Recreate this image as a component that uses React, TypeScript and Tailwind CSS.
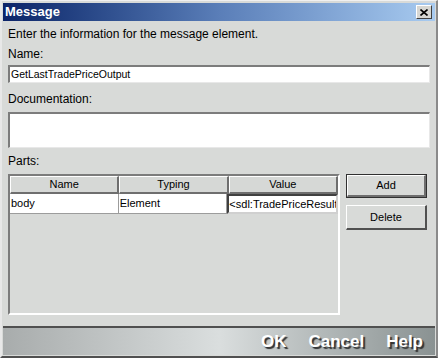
import React from 'react'

const font = { fontFamily: '"Liberation Sans", Arial, sans-serif' }

function HeaderCell({ label }: { label: string }) {
  return (
    <div className="flex h-[18px] flex-1 items-center justify-center border-t border-l border-r-2 border-b-2 border-t-white border-l-white border-r-[#6e6e6e] border-b-[#6e6e6e] bg-[#d6d8d6] text-[11px] text-black">
      {label}
    </div>
  )
}

export default function App() {
  return (
    <div
      className="flex h-[358px] w-[438px] flex-col border-t border-l-2 border-r-2 border-b-2 border-t-[#f0f0f0] border-l-[#e8e8e8] border-r-[#8a8a8a] border-b-[#505050] bg-[#d8dad8] p-[1px]"
      style={font}
    >
      {/* Title bar */}
      <div className="mt-[1px] flex h-[18px] items-center justify-between bg-gradient-to-r from-[#0c2468] via-[#5a7eb8] to-[#a8cbf0] pl-[2px] pr-[3px]">
        <span className="text-[13px] font-bold text-white">Message</span>
        <div className="flex h-[14px] w-[16px] items-center justify-center border border-t-white border-l-white border-r-[#404040] border-b-[#404040] bg-[#d6d6d2]">
          <svg width="8" height="7" viewBox="0 0 8 7">
            <path d="M0.5 0.5 L7.5 6.5 M7.5 0.5 L0.5 6.5" stroke="#000" strokeWidth="1.6" />
          </svg>
        </div>
      </div>

      {/* Content */}
      <div className="flex flex-1 flex-col px-[5px] text-[12px] text-black">
        <p className="mt-[5px] h-[16px] leading-[16px]">Enter the information for the message element.</p>
        <p className="mt-[4px] h-[16px] leading-[16px]">Name:</p>
        <div className="mt-[3px] flex h-[18px] items-center border-t-2 border-l-2 border-r border-b border-t-[#7c7c7c] border-l-[#7c7c7c] border-r-[#e8e8e8] border-b-[#e8e8e8] bg-white px-[1px] text-[10.5px]">
          GetLastTradePriceOutput
        </div>
        <p className="mt-[8px] h-[16px] leading-[16px]">Documentation:</p>
        <div className="mt-[5px] h-[36px] border-t-2 border-l-2 border-r border-b border-t-[#7c7c7c] border-l-[#7c7c7c] border-r-[#e8e8e8] border-b-[#e8e8e8] bg-white" />
        <p className="mt-[5px] h-[16px] leading-[16px]">Parts:</p>

        <div className="mt-[5px] flex gap-[6px]">
          {/* Table */}
          <div className="flex h-[141px] w-[332px] flex-col border-2 border-t-[#7c7c7c] border-l-[#7c7c7c] border-r-white border-b-white bg-[#d8dad8]">
            <div className="flex">
              <HeaderCell label="Name" />
              <HeaderCell label="Typing" />
              <HeaderCell label="Value" />
            </div>
            <div className="flex h-[20px] text-[11px]">
              <div className="flex flex-1 items-center border-r border-b border-[#9c9c9c] bg-white pl-[1px]">body</div>
              <div className="flex flex-1 items-center border-r border-b border-[#9c9c9c] bg-white pl-[1px]">Element</div>
              <div className="flex flex-1 items-center overflow-hidden whitespace-nowrap border-2 border-t-[#404040] border-l-[#404040] border-r-[#d0d0d0] border-b-[#d0d0d0] bg-white">
                &lt;sdl:TradePriceResult
              </div>
            </div>
          </div>

          {/* Side buttons */}
          <div className="flex w-[81px] flex-col gap-[7px]">
            <div className="flex h-[24px] items-center justify-center border border-[#303030] text-[11px]">
              <div className="flex h-full w-full items-center justify-center border-t border-l border-r-2 border-b-2 border-t-white border-l-white border-r-[#6e6e6e] border-b-[#6e6e6e]">
                Add
              </div>
            </div>
            <div className="flex h-[25px] items-center justify-center border-t border-l border-r-2 border-b-2 border-t-white border-l-white border-r-[#505050] border-b-[#505050] text-[11px]">
              Delete
            </div>
          </div>
        </div>
      </div>

      {/* Button bar */}
      <div className="mt-[9px] border-t-2 border-t-[#505050]">
        <div className="flex h-[27px] items-center justify-end gap-[22px] bg-gradient-to-r from-[#a8acac] via-[#dadede] to-[#8a9292] pr-[12px] text-[17px] font-bold text-white [text-shadow:2px_2px_1px_#303030]">
          <span>OK</span>
          <span>Cancel</span>
          <span>Help</span>
        </div>
      </div>
    </div>
  )
}
